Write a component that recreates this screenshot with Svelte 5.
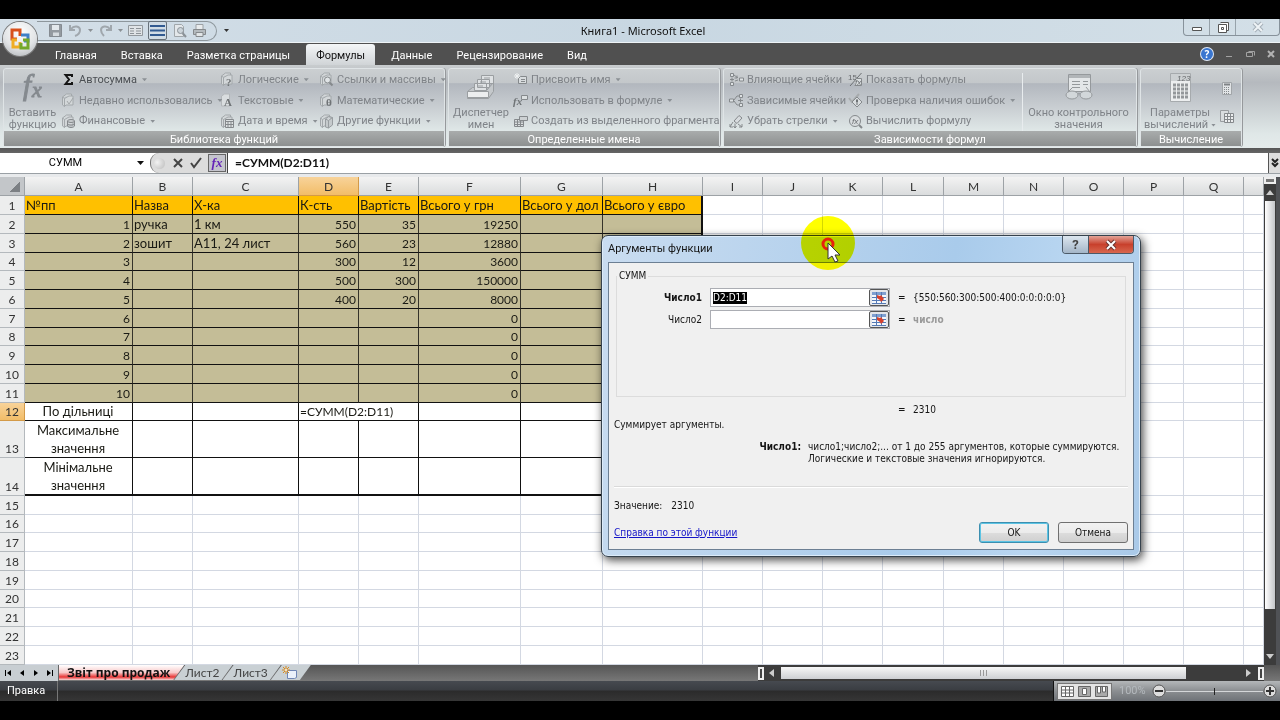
<script lang="ts">
  import { onMount } from "svelte";

  const tabs = ["Главная", "Вставка", "Разметка страницы", "Формулы", "Данные", "Рецензирование", "Вид"];

  const quick = ["save", "undo", "caret", "redo", "caret", "form", "lines", "preview", "print"];

  type Item = { icon: string; text: string; menu?: boolean; on?: boolean };

  const library: Item[][] = [
    [
      { icon: "sigma", text: "Автосумма", menu: true, on: true },
      { icon: "recent", text: "Недавно использовались", menu: true },
      { icon: "money", text: "Финансовые", menu: true },
    ],
    [
      { icon: "logic", text: "Логические", menu: true },
      { icon: "text", text: "Текстовые", menu: true },
      { icon: "date", text: "Дата и время", menu: true },
    ],
    [
      { icon: "lookup", text: "Ссылки и массивы", menu: true },
      { icon: "math", text: "Математические", menu: true },
      { icon: "books", text: "Другие функции", menu: true },
    ],
  ];
  const names: Item[][] = [
    [
      { icon: "tag", text: "Присвоить имя", menu: true },
      { icon: "fxtag", text: "Использовать в формуле", menu: true },
      { icon: "create", text: "Создать из выделенного фрагмента" },
    ],
  ];
  const audit: Item[][] = [
    [
      { icon: "prec", text: "Влияющие ячейки" },
      { icon: "dep", text: "Зависимые ячейки" },
      { icon: "clear", text: "Убрать стрелки", menu: true },
    ],
    [
      { icon: "show", text: "Показать формулы" },
      { icon: "check", text: "Проверка наличия ошибок", menu: true },
      { icon: "eval", text: "Вычислить формулу" },
    ],
  ];

  const columns = "ABCDEFGHIJKLMNOPQ".split("");
  const widths = [108, 60, 106, 60, 60, 102, 82, 100, 60, 60, 60, 61, 60, 60, 60, 60, 60];

  const cells: Record<number, string[]> = {
    1: ["№пп", "Назва", "Х-ка", "К-сть", "Вартість", "Всього у грн", "Всього у дол", "Всього у євро"],
    2: ["1", "ручка", "1 км", "550", "35", "19250"],
    3: ["2", "зошит", "А11, 24 лист", "560", "23", "12880"],
    4: ["3", "", "", "300", "12", "3600"],
    5: ["4", "", "", "500", "300", "150000"],
    6: ["5", "", "", "400", "20", "8000"],
    7: ["6", "", "", "", "", "0"],
    8: ["7", "", "", "", "", "0"],
    9: ["8", "", "", "", "", "0"],
    10: ["9", "", "", "", "", "0"],
    11: ["10", "", "", "", "", "0"],
    12: ["По дільниці", "", "", "=СУММ(D2:D11)"],
    13: ["Максимальне значення"],
    14: ["Мінімальне значення"],
  };
  const rows = Array.from({ length: 23 }, (_, i) => i + 1);

  let formula = $state("=СУММ(D2:D11)");
  let arg1 = $state("D2:D11");
  let arg2 = $state("");
  let first: HTMLInputElement;

  onMount(() => {
    first.focus();
    first.select();
  });

  function cellClass(row: number, col: number) {
    if (row > 14 || col > 7) return "";
    const out = ["used"];
    if (row === 1) out.push("head");
    else if (row < 12) out.push("fill");
    if (row > 11 && col === 0) out.push("mid");
    if (row === 12 && col === 3) out.push("edit");
    if (col === 7) out.push("edge");
    if (row === 14) out.push("last");
    if (/^\d+$/.test(cells[row][col] ?? "")) out.push("num");
    return out.join(" ");
  }
</script>

{#snippet book()}
  <path d="M1.500 4l4-3h5v2M1.500 4v8l2 1.500V5.500zM3.500 5.500L8 3h4v9H5l-1.500 1.500" fill="#d3d7d9" stroke="#a3a8ab" />
{/snippet}

{#snippet icon(name: string)}
  <svg class="icon" viewBox="0 0 15 15" width="15" height="15" fill="none" stroke="#85898c" aria-hidden="true">
    {#if name === "save"}
      <path d="M1.500 1.500h12v12h-12z" fill="#949aa0" stroke="#858b91" />
      <path d="M4 2h7v5H4z" fill="#e3e8ec" stroke="none" /><path d="M5 9.500h6V13H5z" fill="#d6dbdf" stroke="none" />
    {:else if name === "undo"}
      <path d="M2 2v5h5M3 6c3-4 9-3 9 1 0 3-2 5-5 6" stroke="#a0a7ad" stroke-width="2" />
    {:else if name === "redo"}
      <path d="M13 2v5H8M12 6C9 2 3 3 3 7c0 3 1 4 3 6" stroke="#a0a7ad" stroke-width="2" />
    {:else if name === "form"}
      <path d="M.5 2.500h14v10H.5z" fill="#dfe3e6" stroke="#92989d" /><path d="M2 5.500h4M2 8h4M2 10.500h4M8 5.500h5M8 8h5M8 10.500h5" stroke="#8c9297" />
    {:else if name === "lines"}
      <path d="M0 3h15M0 7.500h15M0 12h15" stroke="#315a91" stroke-width="2" />
    {:else if name === "preview"}
      <path d="M2.500 1.500h7l2 2v10h-9z" fill="#e3e7ea" stroke="#a0a6aa" /><circle cx="8.500" cy="7.500" r="3" fill="#ccd4da" stroke="#8b9298" /><path d="M10.500 10l3.500 4" stroke="#8b9298" stroke-width="2" />
    {:else if name === "print"}
      <path d="M4 6V1.500h7V6" fill="#e8ebed" stroke="#9ca1a5" /><path d="M1.500 6.500h12v5h-12z" fill="#b4babe" /><path d="M4 9.500h7v4H4z" fill="#e1e5e7" />
    {:else if name === "sigma"}
      <path d="M11 5V3H4.500l3.500 4.500L4.500 12H11v-2" stroke="#151515" stroke-width="2" />
    {:else if name === "recent"}
      {@render book()}<path d="M6 8l2 3 4-6" stroke="#a3a7a9" />
    {:else if name === "money"}
      {@render book()}<ellipse cx="10" cy="7" rx="3.500" ry="1.500" fill="#c8ccce" /><path d="M6.500 7v5c1 2 6 2 7 0V7M6.500 9.500c1 2 6 2 7 0" />
    {:else if name === "logic"}
      {@render book()}<text x="6" y="14" class="glyph">?</text>
    {:else if name === "text"}
      <path d="M1.500 3l3-2h5v12h-8z" fill="#d9dddf" stroke="#b3b7ba" /><text x="4" y="13" class="glyph">A</text>
    {:else if name === "date"}
      {@render book()}<path d="M5.500 5.500h8v8h-8zM5.500 7.500h8M8 7.500v6M11 7.500v6M5.500 10.500h8" fill="#dce0e1" />
    {:else if name === "lookup"}
      {@render book()}<circle cx="8.500" cy="8" r="3" fill="#e0e4e6" /><path d="M10.500 10.500l3 3" stroke-width="2" />
    {:else if name === "math"}
      {@render book()}<text x="7" y="13" class="glyph">θ</text>
    {:else if name === "books"}
      {@render book()}<path d="M6.500 5l3-2.500 4 1v7.500l-4 3-3-1zM9.500 6.500V14M6.500 5l3 1.500 4-3" fill="#c5cacc" stroke="#989da0" />
    {:else if name === "tag"}
      <path d="M4 1v6M1 4h6M2 2l4 4M6 2L2 6" stroke="#eef1f2" /><path d="M5.500 6.500l2-2h6v7h-8z" fill="#d8dcde" /><path d="M8 7.500h4M8 9.500h4" />
    {:else if name === "fxtag"}
      <text x="0" y="12" class="glyph it">fx</text><path d="M8.500 2.500h6v4h-6z" fill="#dce0e1" />
    {:else if name === "create"}
      <path d="M1.500 5.500h9v7h-9zM1.500 8h9M1.500 10.500h9M4.500 5.500v7M7.500 5.500v7" fill="#d9dddf" /><path d="M6.500 2.500h8v4h-8z" fill="#cdd1d3" />
    {:else if name === "prec"}
      <path d="M1.500 1.500h3v3h-3zM1.500 10.500h3v3h-3zM10.500 6h4v3h-4z" fill="#dde1e3" /><path d="M1 7.500h4M3 5.500v4M5 3l4 3M8 3.500V6H5.500M6 9l3-1" />
    {:else if name === "dep"}
      <path d="M.5 6h4v3h-4zM10.500 1.500h3v3h-3zM10.500 10.500h3v3h-3z" fill="#dde1e3" /><path d="M5 7l3-4h2M5 8l3 4h2M9 7.500h5M11.500 5.500v4" />
    {:else if name === "clear"}
      <path d="M5 7l5-5.500 3 2.500-5 5.500z" fill="#d7dbde" /><path d="M4 8l-3 5M1 10v3h3M6 9.500V14M4.500 12L6 14l1.500-2M9 10l4 3M13 10v3h-3" />
    {:else if name === "show"}
      <text x="0" y="8" class="tiny">15</text><path d="M13.500 1L2 14" stroke="#6d7174" /><path d="M8.500 6.500h5v7h-7" fill="#d9dddf" /><text x="7" y="13" class="tiny it">fx</text>
    {:else if name === "check"}
      <path d="M1 5l3 4 7-8" stroke="#a7abad" stroke-width="2" /><path d="M9 4l5 5-5 5-5-5z" fill="#d9dddf" /><path d="M9 6.500v3M9 10.500v1" stroke="#6d7174" stroke-width="2" />
    {:else if name === "eval"}
      <circle cx="7" cy="7" r="5.500" fill="#d9dddf" /><path d="M11 11l3 3" stroke-width="2" /><text x="4" y="10" class="tiny it">fx</text>
    {:else if name === "calcnow"}
      <path d="M3.500 1.500h9v12h-9z" fill="#e1e4e6" stroke="#a1a5a8" /><path d="M5 3.500h6" stroke="#7f8386" stroke-width="2" /><path d="M5 6.500h6M5 8.500h6M5 10.500h6M5 12.500h6" stroke-dasharray="1 1" />
    {:else if name === "calcsheet"}
      <path d="M1.500 1.500h8v11h-8z" fill="#d9dddf" stroke="#999da0" /><path d="M5.500 4.500h9v9h-9zM5.500 7.500h9M5.500 10.500h9M8.500 4.500v9M11.500 4.500v9" fill="#eceeef" />
    {/if}
  </svg>
{/snippet}

{#snippet group(title: string, kind: string, cols: Item[][])}
  <section class="group {kind}">
    <div class="tools">
      {#if kind === "library"}
        <button class="big">
          <svg viewBox="0 0 28 30" width="28" height="30" aria-hidden="true"><text x="4" y="22" class="fx">f</text><text x="13" y="24" class="fx small">x</text></svg>
          <span>Вставить функцию</span>
        </button>
      {:else if kind === "names"}
        <button class="big">
          <svg viewBox="0 0 28 30" width="28" height="30" fill="#dfe2e4" stroke="#9a9ea1" aria-hidden="true">
            <path d="M14.500 2.500h12v8h-12zM10.500 6.500h12v8h-12zM7.500 10.500h12v7h-12z" /><path d="M10 13h6M13 9h6M17 5h6" />
            <path d="M.5 18.500l5-4h2v3h12l7-8v9l-5 7h-21z" fill="#c4c8cb" /><path d="M.5 18.500h21v6h-21z" fill="#eceeef" />
          </svg>
          <span>Диспетчер имен</span>
        </button>
      {/if}
      {#each cols as items}
        <div class="stack">
          {#each items as item}
            <button class="tool" class:on={item.on}>
              {@render icon(item.icon)}<span>{item.text}</span>{#if item.menu}<i class="caret"></i>{/if}
            </button>
          {/each}
        </div>
      {/each}
      {#if kind === "audit"}
        <button class="big watch">
          <svg viewBox="0 0 28 30" width="28" height="30" fill="none" stroke="#95999c" aria-hidden="true">
            <path d="M3.500 1.500h22v17h-22z" fill="#e3e6e8" /><path d="M4 3.500h21" stroke-width="3" stroke="#b1b5b8" /><path d="M7 8.500h8M7 11.500h8M7 14.500h8M18 8.500h5M18 11.500h5" />
            <ellipse cx="7" cy="22" rx="6" ry="4" fill="#d2d7da" /><ellipse cx="21" cy="22" rx="6" ry="4" fill="#d2d7da" /><path d="M13 21q1-1 2 0M3 19l5-5M25 19l-4-5" />
          </svg>
          <span>Окно контрольного значения</span>
        </button>
      {:else if kind === "calc"}
        <button class="big">
          <svg viewBox="0 0 28 30" width="28" height="30" fill="none" stroke="#93979a" aria-hidden="true">
            <path d="M4.500.5h20v28h-20z" fill="#eceeef" stroke="#a6aaad" /><path d="M5 1h19v7H5z" fill="#ccd0d2" stroke="none" /><text x="11" y="8" class="tiny it">123</text>
            <path d="M7 12h15M7 16h15M7 20h15M7 24h15" stroke-width="3" stroke-dasharray="3 1" />
          </svg>
          <span>Параметры вычислений <i class="caret"></i></span>
        </button>
        <div class="pair">
          <button aria-label="Пересчет">{@render icon("calcnow")}</button>
          <button aria-label="Произвести вычисления">{@render icon("calcsheet")}</button>
        </div>
      {/if}
    </div>
    <h2>{title}</h2>
  </section>
{/snippet}

{#snippet picker()}
  <button class="picker" aria-label="Свернуть">
    <svg viewBox="0 0 14 12" width="14" height="12" aria-hidden="true">
      <path d="M0 0h14v12H0z" fill="#f3f7fc" /><path d="M0 0h14v3H0z" fill="#7f9fd0" /><path d="M0 5.500h14M0 8.500h14M0 11.500h14M4.500 0v12M9.500 0v12" stroke="#5479b4" fill="none" />
      <path d="M5 3l3 1 1-1 3 4-3 3-1-2-3-2z" fill="#d8402c" />
    </svg>
  </button>
{/snippet}

<div class="app">
  <header class="title">
    <button class="office" aria-label="Office">
      <svg viewBox="0 0 24 24" width="24" height="24" fill="none" stroke-width="3" aria-hidden="true">
        <path d="M12 9V3H4v9h5" stroke="#d8501c" /><path d="M13 8h7v6h-4" stroke="#3f7fc6" /><path d="M9 13H5v7h7v-5" stroke="#f0ad24" /><path d="M15 13h5v8h-7v-5" stroke="#74a829" />
      </svg>
    </button>
    <div class="quick">
      {#each quick as q}
        {#if q === "caret"}<i class="caret"></i>{:else}<button class:boxed={q === "lines"} aria-label={q}>{@render icon(q)}</button>{/if}
      {/each}
    </div>
    <i class="caret more"></i>
    <h1>Книга1 - Microsoft Excel</h1>
    <div class="frame-buttons">
      <button aria-label="Свернуть окно"><svg viewBox="0 0 12 12" width="12" height="12"><path d="M1.500 6.500h9v3h-9z" fill="#fff" stroke="#555" /></svg></button>
      <button aria-label="Восстановить"><svg viewBox="0 0 12 12" width="12" height="12"><path d="M3.500 1.500h8v8h-2M1.500 3.500h8v8h-8zM4.500 6.500h2v2h-2z" fill="#fff" stroke="#555" /></svg></button>
      <button class="wide" aria-label="Закрыть"><svg viewBox="0 0 12 12" width="12" height="12"><path d="M2 2l8 8M10 2l-8 8" stroke="#a5b0b8" stroke-width="4" /><path d="M2 2l8 8M10 2l-8 8" stroke="#eef3f6" stroke-width="2" /></svg></button>
    </div>
  </header>

  <nav class="tabs">
    {#each tabs as tab}
      <button class:active={tab === "Формулы"}>{tab}</button>
    {/each}
    <div class="doc-buttons">
      <button class="help" aria-label="Справка">?</button>
      <button aria-label="Свернуть книгу"><svg viewBox="0 0 10 10" width="10" height="10"><path d="M2 7.500h6" stroke="#a2a2a2" stroke-width="1" /></svg></button>
      <button aria-label="Восстановить книгу"><svg viewBox="0 0 10 10" width="10" height="10"><path d="M3.500 2.500h6v4M1.500 3.500h6v4h-6z" stroke="#a2a2a2" fill="none" /></svg></button>
      <button aria-label="Закрыть книгу"><svg viewBox="0 0 10 10" width="10" height="10"><path d="M2 2l6 6M8 2L2 8" stroke="#b2b2b2" stroke-width="2" /></svg></button>
    </div>
  </nav>

  <div class="ribbon">
    {@render group("Библиотека функций", "library", library)}
    {@render group("Определенные имена", "names", names)}
    {@render group("Зависимости формул", "audit", audit)}
    {@render group("Вычисление", "calc", [])}
  </div>

  <div class="formula-bar">
    <input class="name-box" aria-label="Имя" value="СУММ" />
    <i class="caret dark"></i>
    <div class="formula-tools">
      <i class="knob"></i>
      <button aria-label="Отмена ввода"><svg viewBox="0 0 12 12" width="12" height="12"><path d="M2 2l8 8M10 2l-8 8" stroke="#444" stroke-width="2" /></svg></button>
      <button aria-label="Ввод"><svg viewBox="0 0 12 12" width="12" height="12"><path d="M1 6l3 4 7-9" stroke="#444" stroke-width="2" fill="none" /></svg></button>
      <button class="insert" aria-label="Вставить функцию">fx</button>
    </div>
    <input class="formula" aria-label="Строка формул" bind:value={formula} />
    <button class="expand" aria-label="Развернуть"><svg viewBox="0 0 8 10" width="8" height="10"><path d="M1 1l3 3 3-3M1 5l3 3 3-3" stroke="#222" stroke-width="2" fill="none" /></svg></button>
  </div>

  <div class="sheet">
    <table>
      <colgroup>
        <col class="rowcol" />
        {#each widths as w}<col style="width: {w}px" />{/each}
        <col />
      </colgroup>
      <thead>
        <tr>
          <th class="corner"></th>
          {#each columns as c}<th class:sel={c === "D"}>{c}</th>{/each}
          <th></th>
        </tr>
      </thead>
      <tbody>
        {#each rows as r}
          <tr class:tall={r === 13 || r === 14}>
            <th class:sel={r === 12}>{r}</th>
            {#each columns as _, c}
              <td class={cellClass(r, c)}>{#if r === 12 && c === 3}<span>{cells[r][c]}</span>{:else}{cells[r]?.[c] ?? ""}{/if}</td>
            {/each}
            <td></td>
          </tr>
        {/each}
      </tbody>
    </table>
    <div class="vscroll">
      <i class="split"></i>
      <i class="arrow up"></i>
      <i class="thumb"></i>
      <i class="arrow down"></i>
    </div>
  </div>

  <div class="bottom">
    <div class="sheet-nav">
      <button aria-label="Первый лист"><svg viewBox="0 0 8 8" width="8" height="8"><path d="M1 1h1v6H1zM7 1v6L3 4z" /></svg></button>
      <button aria-label="Предыдущий лист"><svg viewBox="0 0 8 8" width="8" height="8"><path d="M6 1v6L2 4z" /></svg></button>
      <button aria-label="Следующий лист"><svg viewBox="0 0 8 8" width="8" height="8"><path d="M2 1v6l4-3z" /></svg></button>
      <button aria-label="Последний лист"><svg viewBox="0 0 8 8" width="8" height="8"><path d="M6 1h1v6H6zM1 1v6l4-3z" /></svg></button>
    </div>
    <button class="sheet-tab current">Звіт про продаж</button>
    <button class="sheet-tab">Лист2</button>
    <button class="sheet-tab">Лист3</button>
    <button class="sheet-tab" aria-label="Вставить лист">
      <svg viewBox="0 0 16 14" width="16" height="14"><path d="M5.500 4.500h9v7l-2 1h-7z" fill="#eaf1fb" stroke="#6f86b5" /><path d="M4 0v8M0 4h8M1 1l6 6M7 1L1 7" stroke="#d98b1a" /><circle cx="4" cy="4" r="1" fill="#fff" /></svg>
    </button>
    <div class="hscroll">
      <i class="grip"></i>
      <i class="arrow left"></i>
      <i class="thumb"></i>
      <i class="arrow right"></i>
      <i class="grip"></i>
    </div>
  </div>

  <footer class="status">
    <span class="mode">Правка</span>
    <div class="view">
      <div class="view-buttons">
        <button aria-label="Обычный"><svg viewBox="0 0 13 11" width="13" height="11"><path d="M.5.5h12v10H.5zM.5 4h12M.5 7h12M4.500.5v10M8.500.5v10" fill="#fff" stroke="#666" /></svg></button>
        <button aria-label="Разметка"><svg viewBox="0 0 13 11" width="13" height="11"><path d="M.5.5h12v10H.5z" fill="#aaa" stroke="#666" /><path d="M4.500 2.500h4v6h-4z" fill="#fff" stroke="#666" /></svg></button>
        <button aria-label="Страничный"><svg viewBox="0 0 13 11" width="13" height="11"><path d="M.5.5h12v10H.5z" fill="#aaa" stroke="#666" /><path d="M2.500 1v6h3V1M7.500 1v5h3V1" fill="#fff" stroke="#666" /></svg></button>
      </div>
      <span class="percent">100%</span>
      <button class="zoom" aria-label="Уменьшить"><svg viewBox="0 0 14 14" width="14" height="14"><circle cx="7" cy="7" r="6" fill="#ddd" stroke="#555" /><path d="M3 7h8" stroke="#333" stroke-width="2" /></svg></button>
      <div class="track"><i></i></div>
      <button class="zoom" aria-label="Увеличить"><svg viewBox="0 0 14 14" width="14" height="14"><circle cx="7" cy="7" r="6" fill="#ddd" stroke="#555" /><path d="M3 7h8M7 3v8" stroke="#333" stroke-width="2" /></svg></button>
    </div>
  </footer>

  <div class="dialog" role="dialog" aria-labelledby="dlg-title">
    <div class="dialog-title">
      <span id="dlg-title">Аргументы функции</span>
      <div class="dialog-buttons">
        <button aria-label="Помощь"><b>?</b></button>
        <button class="close" aria-label="Закрыть окно"><svg viewBox="0 0 12 10" width="12" height="10"><path d="M2 1l8 8M10 1L2 9" stroke="#6b3430" stroke-width="4" /><path d="M2 1l8 8M10 1L2 9" stroke="#fff" stroke-width="2" /></svg></button>
      </div>
    </div>
    <div class="dialog-body">
      <fieldset>
        <legend>СУММ</legend>
        <div class="arg">
          <label for="arg1"><b>Число1</b></label>
          <div class="field"><input id="arg1" bind:this={first} bind:value={arg1} />{@render picker()}</div>
          <span>=</span><span>{"{550:560:300:500:400:0:0:0:0:0}"}</span>
        </div>
        <div class="arg">
          <label for="arg2">Число2</label>
          <div class="field"><input id="arg2" bind:value={arg2} />{@render picker()}</div>
          <span>=</span><b class="hint">число</b>
        </div>
      </fieldset>
      <div class="arg result"><span>=</span><span>2310</span></div>
      <p>Суммирует аргументы.</p>
      <div class="about">
        <b>Число1:</b>
        <span>число1;число2;... от 1 до 255 аргументов, которые суммируются.<br />Логические и текстовые значения игнорируются.</span>
      </div>
      <hr />
      <p class="value"><span>Значение:</span><span>2310</span></p>
      <div class="actions">
        <a href="#help">Справка по этой функции</a>
        <button class="ok">OK</button>
        <button>Отмена</button>
      </div>
    </div>
  </div>

  <div class="halo"></div>
  <svg class="pointer" viewBox="0 0 56 56" width="56" height="56" aria-hidden="true">
    <circle cx="28" cy="28" r="5" fill="none" stroke="#e8200c" stroke-width="3" />
    <path d="M28 27v16l4-3 3 6 3-1-3-6h5z" fill="#fff" stroke="#333" />
  </svg>
</div>

<style>
  :global(body) {
    margin: 0;
    background: #000;
  }
  .app {
    position: relative;
    padding: 19px 0;
    font: 11px/16px Roboto, "Noto Sans", sans-serif;
    color: #222;
    background: #000;
  }
  .app * {
    box-sizing: border-box;
  }
  button {
    border: 0;
    padding: 0;
    background: none;
    font: inherit;
    color: inherit;
    white-space: nowrap;
  }
  input {
    font: inherit;
    border: 0;
    padding: 0;
    outline: none;
    min-width: 0;
  }
  svg {
    display: block;
    flex: none;
    overflow: visible;
  }
  i {
    display: block;
    flex: none;
  }
  h1, h2, p {
    margin: 0;
    font-weight: normal;
  }
  .glyph {
    font: bold 11px "Liberation Serif", serif;
    fill: #6f7376;
    stroke: none;
  }
  .tiny {
    font: 8px "Liberation Sans", sans-serif;
    fill: #66696c;
    stroke: none;
  }
  .it {
    font-style: italic;
  }
  .fx {
    font: italic 29px "Liberation Serif", serif;
    fill: #858a8f;
    stroke: #858a8f;
  }
  .fx.small {
    font-size: 22px;
  }
  .caret {
    width: 5px;
    height: 3px;
    background: #8b9095;
    clip-path: polygon(0 0, 100% 0, 50% 100%);
  }

  /* title bar */
  .title {
    display: flex;
    align-items: center;
    height: 24px;
    background: linear-gradient(90deg, #d3dee7, #c8d7e2 50%, #d3dfe7);
    border-bottom: 1px solid #eef3f6;
  }
  .office {
    display: grid;
    place-items: center;
    width: 34px;
    height: 34px;
    margin: 3px 0 0 3px;
    align-self: flex-start;
    border-radius: 50%;
    background: radial-gradient(circle at 50% 30%, #fff, #e2e4e6 55%, #a9adb1);
    box-shadow: 0 0 0 1px #777;
    z-index: 1;
  }
  .quick {
    display: flex;
    align-items: center;
    gap: 5px;
    height: 20px;
    padding: 0 9px 0 11px;
    border: 1px solid #8d969c;
    border-left: 0;
    border-radius: 0 11px 11px 0;
  }
  .quick .boxed {
    padding: 1px;
    border: 1px solid #67717a;
    border-radius: 2px;
  }
  .more {
    margin-left: 7px;
    background: #333;
  }
  h1 {
    flex: 1;
    padding-right: 126px;
    font: 11px/16px "Noto Sans", sans-serif;
    text-align: center;
    color: #111;
  }
  .frame-buttons {
    display: flex;
    align-self: flex-start;
    border: 1px solid #87929b;
    border-top: 0;
    border-radius: 0 0 4px 4px;
  }
  .frame-buttons button {
    display: grid;
    place-items: center;
    width: 26px;
    height: 16px;
    border-right: 1px solid #97a2aa;
  }
  .frame-buttons .wide {
    width: 43px;
    border: 0;
  }

  /* ribbon tabs */
  .tabs {
    display: flex;
    height: 22px;
    padding-left: 43px;
    background: #505050;
    color: #fff;
  }
  .tabs > button {
    padding: 4px 12px 0;
  }
  .tabs > .active {
    margin: 1px 4px 0 4px;
    padding: 3px 10px 0;
    border-radius: 3px 3px 0 0;
    background: linear-gradient(#f4f6f7, #d0d4d7);
    color: #111;
  }
  .doc-buttons {
    display: flex;
    align-items: center;
    gap: 11px;
    margin-left: auto;
    padding-right: 4px;
  }
  .help {
    width: 12px;
    height: 12px;
    border-radius: 50%;
    background: #3a76d0;
    box-shadow: 0 0 0 1px #dfe9f8;
    color: #fff;
    font: bold 10px/12px "Noto Sans", sans-serif;
  }

  /* ribbon */
  .ribbon {
    display: flex;
    gap: 3px;
    height: 88px;
    padding: 3px 3px 5px;
    background: linear-gradient(#c8ccce, #b5b9be 20%, #dfe7e7 78%, #e5ecec 94%, #555 94%, #666);
    color: #7f8388;
  }
  .group {
    display: flex;
    flex-direction: column;
    flex: none;
    height: 79px;
    border: 1px solid #dfe4e6;
    border-radius: 3px;
    background: linear-gradient(#cbcfd1, #c3c7ca 18%, #b2b7be 19%, #c9ced2 50%, #dfe7e7 80%);
    box-shadow: 1px 0 0 #96999c;
  }
  .tools {
    display: flex;
    flex: 1;
    min-height: 0;
    padding-top: 1px;
  }
  .group h2 {
    flex: none;
    height: 15px;
    background: linear-gradient(#a9acac, #8d9090);
    color: #fff;
    font: 11px/17px Roboto, "Noto Sans", sans-serif;
    text-align: center;
  }
  .library {
    width: 442px;
  }
  .names {
    width: 272px;
  }
  .audit {
    width: 414px;
  }
  .calc {
    width: 102px;
  }
  .big {
    display: flex;
    flex-direction: column;
    align-items: center;
    gap: 4px;
    width: 57px;
    padding-top: 3px;
    line-height: 12px;
    white-space: normal;
  }
  .big .caret {
    display: inline-block;
    vertical-align: middle;
  }
  .names .big {
    width: 64px;
  }
  .audit .watch {
    width: 112px;
    margin-top: 3px;
    padding-top: 0;
    border-left: 1px solid #e8ecee;
  }
  .calc .big {
    width: 78px;
  }
  .stack {
    display: flex;
    flex-direction: column;
    gap: 1px;
    width: 99px;
  }
  .library .stack:nth-child(2) {
    width: 159px;
  }
  .audit .stack {
    width: 124px;
    padding-left: 5px;
  }
  .audit .stack:nth-child(2) {
    width: 174px;
    padding-left: 0;
  }
  .tool {
    display: flex;
    align-items: center;
    gap: 3px;
    height: 20px;
  }
  .tool span {
    line-height: 18px;
  }
  .tool.on {
    color: #4b4f54;
  }
  .tool .caret {
    margin-left: 2px;
  }
  .pair {
    display: flex;
    flex-direction: column;
    gap: 13px;
    padding-top: 11px;
  }

  /* formula bar */
  .formula-bar {
    display: flex;
    align-items: center;
    height: 20px;
    background: #fff;
  }
  .name-box {
    width: 131px;
    text-align: center;
  }
  .caret.dark {
    width: 7px;
    height: 4px;
    margin: 0 6px;
    background: #111;
  }
  .formula-tools {
    display: flex;
    align-items: center;
    gap: 6px;
    height: 20px;
    padding-left: 3px;
    border-left: 1px solid #777;
    border-right: 1px solid #444;
    border-radius: 9px 0 0 9px;
    background: #dcdcdc;
  }
  .knob {
    width: 11px;
    height: 11px;
    margin-right: 1px;
    border-radius: 50%;
    background: radial-gradient(circle at 30% 40%, #f2f2f2, #bbb);
  }
  .formula-tools .insert {
    width: 18px;
    height: 18px;
    margin-right: 1px;
    border: 1px solid #666;
    background: #c4c4cc;
    color: #6523b8;
    font: italic bold 13px/14px "Liberation Serif", serif;
  }
  .formula {
    flex: 1;
    padding-left: 7px;
    font: bold 12px/18px Lato, "Open Sans", sans-serif;
    color: #111;
  }
  .expand {
    display: grid;
    place-items: center;
    width: 12px;
    height: 20px;
    border-left: 1px solid #555;
    background: #ddd;
  }

  /* grid */
  .sheet {
    display: flex;
    border-top: 1px solid #9aa0a5;
    background: linear-gradient(#e8eaec 3px, #fff 3px);
    padding-top: 3px;
  }
  table {
    flex: 1;
    width: 0;
    table-layout: fixed;
    border-spacing: 0;
    background: #fff;
    font: 13px/17px Lato, "Open Sans", sans-serif;
    color: #1a1a14;
  }
  .rowcol {
    width: 25px;
  }
  tr {
    height: 19px;
  }
  tbody tr:nth-child(4n) {
    height: 18px;
  }
  tbody .tall {
    height: 37px;
  }
  th, td {
    padding: 0 2px 0 1px;
    border-right: 1px solid #d3d8e2;
    border-bottom: 1px solid #d3d8e2;
    vertical-align: bottom;
    white-space: nowrap;
  }
  .tall td {
    line-height: 18px;
    white-space: normal;
  }
  th {
    font-size: 12px;
    font-weight: normal;
    background: #eceded;
    border-color: #b4b9bd;
    color: #333;
    padding: 0;
  }
  thead th {
    background: linear-gradient(#f3f3f3, #dadcdd);
    border-color: #9da2a6;
  }
  .corner {
    background: linear-gradient(135deg, #c3c6c9 50%, #7c8084 50%) right 4px bottom 3px / 11px 11px no-repeat, #c3c6c9;
  }
  th.sel {
    background: linear-gradient(#f8d39a, #f2bd68);
    border-color: #d39a48;
  }
  .used {
    border-color: #111;
  }
  .head {
    background: #ffc000;
  }
  .fill {
    background: #c4bd97;
    border-right-color: #35332a;
  }
  .num {
    font-size: 12px;
    text-align: right;
  }
  .mid {
    text-align: center;
  }
  .edge {
    border-right: 2px solid #111;
  }
  .last {
    border-bottom: 2px solid #111;
  }
  .edit span {
    position: relative;
    display: inline-block;
    padding-right: 3px;
    background: #fff;
    font-size: 12px;
  }
  .vscroll {
    display: flex;
    flex-direction: column;
    align-items: center;
    width: 16px;
    background: #3c3c3c;
    border-right: 4px solid #505256;
  }
  .split {
    width: 12px;
    height: 7px;
    border: 2px solid #eee;
    background: #777;
  }
  .arrow {
    width: 8px;
    height: 5px;
    background: #ccc;
  }
  .up {
    margin: 6px 0;
    clip-path: polygon(50% 0, 100% 100%, 0 100%);
  }
  .down {
    margin: auto 0 6px;
    clip-path: polygon(0 0, 100% 0, 50% 100%);
  }
  .vscroll .thumb {
    width: 10px;
    height: 408px;
    background: linear-gradient(90deg, #fff, #c3c5c9);
  }

  /* sheet tabs */
  .bottom {
    display: flex;
    height: 16px;
    background: linear-gradient(#555, #777);
    font: 12px/15px Lato, "Open Sans", sans-serif;
    color: #444;
  }
  .sheet-nav {
    display: flex;
    align-items: center;
    gap: 6px;
    width: 59px;
    padding-left: 4px;
    border-right: 1px solid #666;
    background: #c8ced2;
  }
  .sheet-tab {
    height: 15px;
    margin-left: -10px;
    padding: 0 13px 0 11px;
    background: #c9d0d4;
    clip-path: polygon(11px 0, 100% 0, calc(100% - 11px) 100%, 0 100%);
  }
  .sheet-tab.current {
    margin-left: 0;
    padding: 0 14px 0 8px;
    background: linear-gradient(#fff, #f8c9c9 50%, #e83434 80%, #f6d8d8);
    clip-path: polygon(0 0, 100% 0, calc(100% - 11px) 100%, 0 100%);
    color: #111;
    font: bold 12px/15px "Open Sans", sans-serif;
  }
  .hscroll {
    display: flex;
    align-items: center;
    width: 506px;
    margin-left: auto;
    margin-right: 16px;
    background: #3c3c3c;
  }
  .grip {
    width: 6px;
    height: 13px;
    border: 2px solid #eee;
    background: #444;
  }
  .left, .right {
    width: 5px;
    height: 8px;
  }
  .left {
    margin: 0 7px 0 5px;
    clip-path: polygon(100% 0, 100% 100%, 0 50%);
  }
  .right {
    margin: 0 7px 0 auto;
    clip-path: polygon(0 0, 100% 50%, 0 100%);
  }
  .hscroll .thumb {
    flex: 1;
    height: 12px;
    margin-right: 60px;
    background:
      repeating-linear-gradient(90deg, #999 0 1px, transparent 1px 3px) center / 7px 6px no-repeat,
      linear-gradient(#f7f7f7, #cdcfd3);
  }

  /* status bar */
  .status {
    display: flex;
    justify-content: space-between;
    height: 20px;
    background: linear-gradient(#464a50, #3a3d42 45%, #2b2b2b 50%, #363636);
    color: #fff;
    line-height: 20px;
  }
  .mode {
    width: 58px;
    padding-left: 7px;
    border-right: 1px solid #777;
  }
  .view {
    display: flex;
    align-items: center;
    width: 227px;
    padding: 0 3px;
    border-left: 1px solid #111;
    background: linear-gradient(#b4b7b9, #8b8e91 50%, #6e7277);
  }
  .view-buttons {
    display: flex;
    align-items: center;
    gap: 4px;
    height: 17px;
    padding: 0 3px;
    border: 1px solid #777;
    background: #e4e4e4;
  }
  .percent {
    flex: none;
    width: 40px;
    padding-left: 7px;
    color: #b4b9bd;
  }
  .track {
    display: flex;
    justify-content: center;
    align-items: center;
    flex: 1;
    height: 7px;
    background: linear-gradient(#d4d6d8, #d4d6d8) center / 100% 1px no-repeat;
  }
  .track i {
    width: 1px;
    height: 7px;
    background: #222;
  }

  /* function arguments window */
  .dialog {
    position: absolute;
    left: 601px;
    top: 235px;
    width: 540px;
    padding: 0 6px 6px;
    border: 1px solid #36424d;
    border-radius: 7px;
    background: linear-gradient(100deg, #c9dcf0, #a9cbeb 60%, #b9d6f1 80%, #a9c9e8);
    box-shadow: inset 0 0 0 1px #dcebf9, 2px 3px 10px #000b;
    line-height: 12px;
    color: #151515;
  }
  .dialog-title {
    display: flex;
    justify-content: space-between;
    align-items: center;
    height: 26px;
  }
  .dialog-buttons {
    display: flex;
    align-self: flex-start;
    border: 1px solid #4c5a68;
    border-top: 0;
    border-radius: 0 0 4px 4px;
    overflow: hidden;
  }
  .dialog-buttons button {
    display: grid;
    place-items: center;
    width: 25px;
    height: 17px;
    background: linear-gradient(#dce6ef, #a4b6c8);
    color: #444;
    font-size: 13px;
  }
  .dialog-buttons .close {
    width: 45px;
    border-left: 1px solid #4c5a68;
    background: linear-gradient(#e3a397, #c8402c 50%, #d8674f);
  }
  .dialog-body {
    padding: 7px 5px 6px;
    border: 1px solid #6c7f93;
    background: #f0f0f0;
    font: 10px/12px "DejaVu Sans Condensed", "DejaVu Sans", sans-serif;
  }
  fieldset {
    display: flex;
    flex-direction: column;
    gap: 3px;
    height: 127px;
    margin: 0 2px;
    padding: 6px 0 0;
    border: 1px solid #dcdcdc;
    min-width: 0;
  }
  legend {
    padding: 0 2px;
  }
  .arg {
    display: grid;
    grid-template-columns: 85px 180px 7px 1fr;
    column-gap: 8px;
    align-items: center;
    height: 19px;
  }
  .arg label {
    text-align: right;
  }
  .arg > span:nth-of-type(1) {
    grid-column: 3;
  }
  .field {
    display: flex;
    height: 19px;
    border: 1px solid #abadb3;
    background: #fff;
  }
  .field input {
    flex: 1;
    padding-left: 2px;
    background: #fff;
    line-height: 12px;
  }
  .field input::selection {
    background: #000;
    color: #fff;
  }
  .picker {
    display: grid;
    place-items: center;
    width: 20px;
    border: 1px solid #555;
    border-radius: 2px;
    background: #e4e6ea;
  }
  .hint {
    color: #9a9a9a;
  }
  .result {
    margin: 3px 3px 0;
  }
  .about {
    display: grid;
    grid-template-columns: 187px 1fr;
    column-gap: 7px;
    margin-top: 10px;
    white-space: nowrap;
  }
  .about b {
    text-align: right;
  }
  hr {
    margin: 21px 0 12px;
    border: 0;
    border-top: 1px solid #dadada;
    border-bottom: 1px solid #fff;
  }
  .value {
    display: flex;
    gap: 9px;
  }
  .actions {
    display: flex;
    align-items: center;
    gap: 9px;
    margin-top: 10px;
  }
  .actions a {
    margin-right: auto;
    color: #1414c8;
  }
  .actions button {
    width: 70px;
    height: 21px;
    border: 1px solid #707070;
    border-radius: 3px;
    background: linear-gradient(#f2f2f2, #ebebeb 50%, #dddddd 50%, #cfcfcf);
  }
  .actions .ok {
    border-color: #3c8fb0;
    box-shadow: inset 0 0 0 1px #5cc4e4;
  }
  .halo {
    position: absolute;
    left: 801px;
    top: 216px;
    width: 54px;
    height: 54px;
    border-radius: 50%;
    background: #ff0;
    mix-blend-mode: multiply;
    pointer-events: none;
  }
  .pointer {
    position: absolute;
    left: 800px;
    top: 216px;
    pointer-events: none;
  }
</style>
